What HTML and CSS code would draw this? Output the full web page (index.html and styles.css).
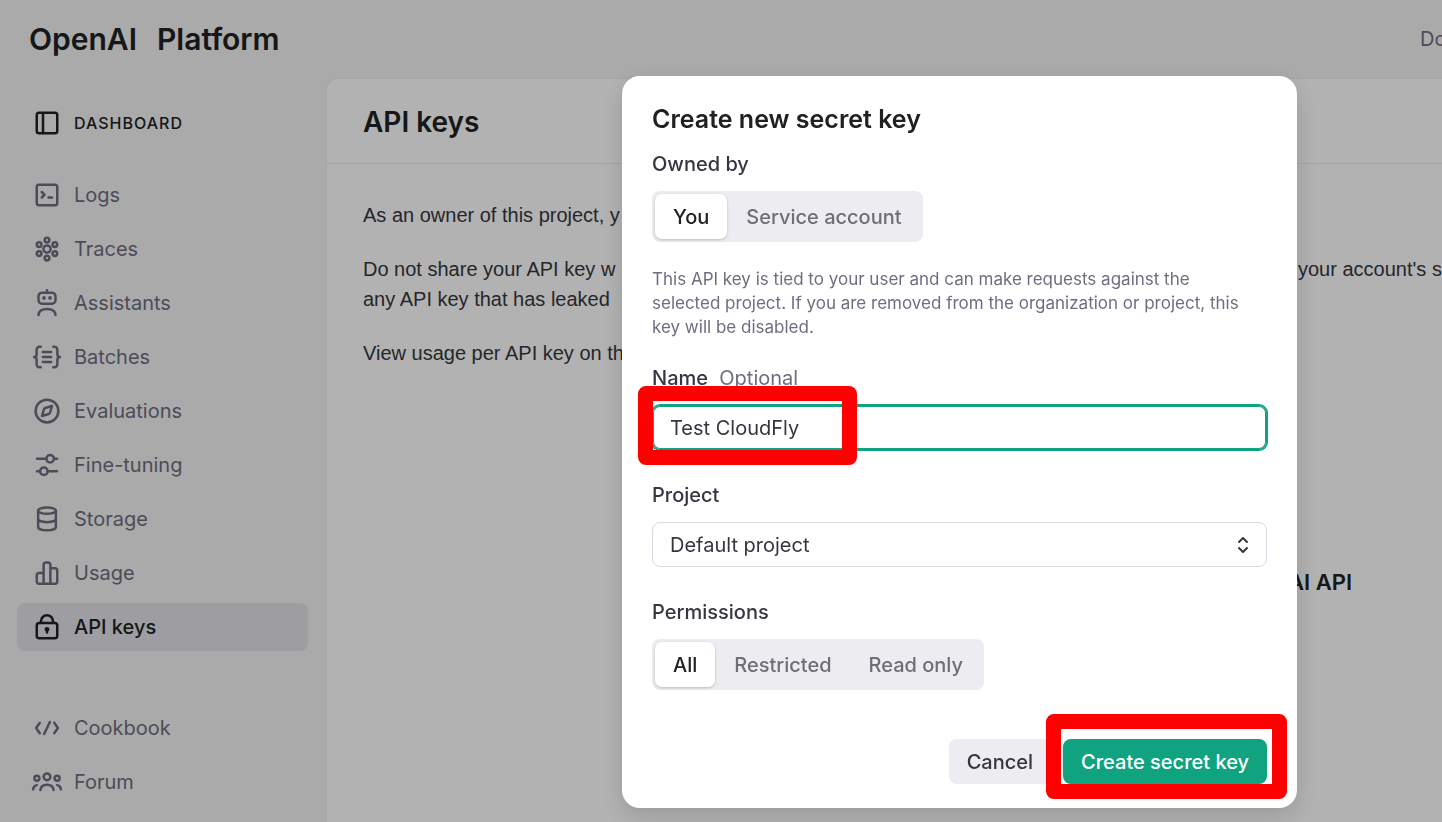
FILE: index.html
```
<!DOCTYPE html>
<html lang="en">
<head>
    <meta charset="UTF-8">
    <title>API keys - OpenAI Platform</title>
    <link rel="stylesheet" href="styles.css">
</head>
<body>
<div class="page">
    <header class="header">
        <a class="logo" href="#"><span>OpenAI</span><span>Platform</span></a>
        <nav class="top-nav"><a href="#">Docs</a></nav>
    </header>
    <div class="main">
        <nav class="sidebar">
            <a class="item title" href="#">
                <svg class="icon" viewBox="0 0 24 24"><rect x="3.800" y="3.800" width="16.400" height="16.400" rx="1.800"/><path d="M8.800 4v16"/></svg>
                DASHBOARD
            </a>
            <a class="item" href="#">
                <svg class="icon" viewBox="0 0 24 24"><rect x="3.800" y="3.800" width="16.400" height="16.400" rx="1.800"/><path d="M7.800 9.600 10 11.800l-2.200 2.200M13.200 14h2.800"/></svg>
                Logs
            </a>
            <a class="item" href="#">
                <svg class="icon" viewBox="0 0 24 24"><circle cx="12" cy="12" r="2.900"/><circle cx="12" cy="4.800" r="1.900"/><circle cx="12" cy="19.200" r="1.900"/><circle cx="5.700" cy="8.400" r="1.900"/><circle cx="18.300" cy="8.400" r="1.900"/><circle cx="5.700" cy="15.600" r="1.900"/><circle cx="18.300" cy="15.600" r="1.900"/></svg>
                Traces
            </a>
            <a class="item" href="#">
                <svg class="icon" viewBox="0 0 24 24"><path d="M12 1.800v2M5.200 21.500c0-2.800 2.800-4.800 6.800-4.800s6.800 2 6.800 4.800"/><rect x="5.200" y="3.700" width="13.600" height="8.800" rx="2.800"/><g class="fill"><circle cx="9.600" cy="7.900" r="1.500"/><circle cx="14.400" cy="7.900" r="1.500"/></g></svg>
                Assistants
            </a>
            <a class="item" href="#">
                <svg class="icon" viewBox="0 0 24 24"><path d="M7 3.800H6A2.300 2.300 0 0 0 3.700 6.100v3.400c0 1.500-.7 2.500-2 2.500 1.300 0 2 1 2 2.500v3.400A2.300 2.300 0 0 0 6 20.200h1M17 3.800h1a2.300 2.300 0 0 1 2.300 2.300v3.400c0 1.500.7 2.500 2 2.500-1.300 0-2 1-2 2.500v3.400a2.300 2.300 0 0 1-2.300 2.300h-1M8.700 8h6.600M8.700 12h6.600M8.700 16h6.600"/></svg>
                Batches
            </a>
            <a class="item" href="#">
                <svg class="icon" viewBox="0 0 24 24"><circle cx="12" cy="12" r="9.100"/><path d="M16 8l-1.600 5.400a1.500 1.500 0 0 1-1 1L8 16l1.600-5.400a1.500 1.500 0 0 1 1-1z"/></svg>
                Evaluations
            </a>
            <a class="item" href="#">
                <svg class="icon" viewBox="0 0 24 24"><path d="M4 7h7.500M17.500 7H20M4 17h2.500M12.500 17H20"/><circle cx="14.500" cy="7" r="3"/><circle cx="9.500" cy="17" r="3"/></svg>
                Fine-tuning
            </a>
            <a class="item" href="#">
                <svg class="icon" viewBox="0 0 24 24"><ellipse cx="12" cy="5.300" rx="7.100" ry="2.500"/><path d="M4.900 5.300v13.100c0 1.500 3.200 2.600 7.100 2.600s7.100-1.100 7.100-2.600V5.300M4.900 12c0 1.500 3.200 2.500 7.100 2.500s7.100-1 7.100-2.500"/></svg>
                Storage
            </a>
            <a class="item" href="#">
                <svg class="icon" viewBox="0 0 24 24"><path d="M9.300 20.500V5.300a1.800 1.800 0 0 1 1.800-1.800h1.800a1.800 1.800 0 0 1 1.800 1.800v15.200M9.300 12H5.600a1.800 1.800 0 0 0-1.800 1.800v5a1.700 1.700 0 0 0 1.700 1.700h13a1.700 1.700 0 0 0 1.700-1.700V10a1.800 1.800 0 0 0-1.800-1.800h-3.700"/></svg>
                Usage
            </a>
            <a class="item active" href="#">
                <svg class="icon" viewBox="0 0 24 24"><rect x="3.800" y="8.700" width="16.400" height="12.200" rx="2"/><path d="M7.200 8.500V7.400a4.800 4.800 0 0 1 9.600 0v1.100M12 14.500V16.400"/><circle class="fill" cx="12" cy="13.800" r="1.900"/></svg>
                API keys
            </a>
            <div class="links">
                <a class="item" href="#">
                    <svg class="icon" viewBox="0 0 24 24"><path d="M6.200 7.800 3.300 12l2.900 4.200M17.800 7.800l2.900 4.200-2.900 4.200M14.300 7.200l-4.600 9.600"/></svg>
                    Cookbook
                </a>
                <a class="item" href="#">
                    <svg class="icon" viewBox="0 0 24 24"><circle cx="12" cy="7.800" r="2.700"/><circle cx="3.900" cy="9" r="2"/><circle cx="20.100" cy="9" r="2"/><path d="M6.700 18.400c.4-2.700 2.500-4.100 5.300-4.100s4.900 1.400 5.300 4.100M.9 17.900c.2-1.900 1.200-3 2.900-3.400M23.100 17.900c-.2-1.900-1.200-3-2.900-3.400"/></svg>
                    Forum
                </a>
            </div>
        </nav>
        <main class="content">
            <h1>API keys</h1>
            <div class="text">
                <p>As an owner of this project, y</p>
                <p>
                    <span class="row"><span>Do not share your API key w</span><span>your account's s</span></span>
                    any API key that has leaked
                </p>
                <p>View usage per API key on th</p>
            </div>
            <h2>AI API</h2>
        </main>
    </div>
</div>
<div class="overlay">
    <form class="modal" role="dialog" aria-labelledby="modal-title">
        <h2 id="modal-title">Create new secret key</h2>
        <div class="label">Owned by</div>
        <div class="tabs">
            <button type="button" class="on">You</button>
            <button type="button">Service account</button>
        </div>
        <p class="desc">This API key is tied to your user and can make requests against the selected project. If you are removed from the organization or project, this key will be disabled.</p>
        <label class="label" for="name">Name <span>Optional</span></label>
        <div class="field">
            <input id="name" type="text" value="Test CloudFly">
            <div class="mark mark-name"></div>
        </div>
        <label class="label" for="project">Project</label>
        <div class="field">
            <select id="project">
                <option>Default project</option>
            </select>
            <svg class="arrows" viewBox="0 0 12 18"><path d="M2 6l4-4 4 4M2 12l4 4 4-4"/></svg>
        </div>
        <div class="label">Permissions</div>
        <div class="tabs">
            <button type="button" class="on">All</button>
            <button type="button">Restricted</button>
            <button type="button">Read only</button>
        </div>
        <div class="actions">
            <button type="button" class="btn">Cancel</button>
            <div class="submit">
                <button type="submit" class="btn primary">Create secret key</button>
                <div class="mark mark-submit"></div>
            </div>
        </div>
    </form>
</div>
</body>
</html>
```
FILE: styles.css
```
*{
    margin: 0;
    padding: 0;
    box-sizing: border-box;
}
body{
    font: 20px/30px Inter, "Liberation Sans", sans-serif;
    color: #353740;
    background: #f4f4f4;
    overflow: hidden;
}
a{
    color: inherit;
    text-decoration: none;
}
button,input,select{
    font: inherit;
    color: inherit;
    border: 0;
}
.page{
    display: flex;
    flex-direction: column;
    min-height: 100vh;
    overflow: hidden;
}
.header{
    height: 78px;
    padding: 0 0 1px 29px;
    display: flex;
    align-items: center;
    justify-content: space-between;
}
.logo{
    display: flex;
    gap: 20px;
    font-size: 30px;
    font-weight: 600;
    color: #202123;
}
.top-nav{
    width: 22px;
    color: #6e6e80;
    white-space: nowrap;
}
.main{
    flex: 1;
    display: flex;
}
/*sidebar*/
.sidebar{
    width: 326px;
    padding: 21px 18px 16px 17px;
    display: flex;
    flex-direction: column;
    gap: 6px;
    flex-shrink: 0;
}
.item{
    height: 48px;
    padding-left: 15px;
    display: flex;
    align-items: center;
    gap: 12px;
    border-radius: 8px;
    color: #6e6e80;
}
.item.title{
    margin-bottom: 18px;
    font-size: 16px;
    font-weight: 500;
    letter-spacing: 1px;
    color: #202123;
}
.item.active{
    background: #e3e1e9;
    color: #202123;
    font-weight: 500;
}
.links{
    margin-top: 47px;
    display: flex;
    flex-direction: column;
    gap: 6px;
}
.icon{
    width: 30px;
    height: 30px;
    flex-shrink: 0;
    overflow: visible;
    fill: none;
    stroke: currentColor;
    stroke-width: 2;
    stroke-linecap: round;
    stroke-linejoin: round;
}
.icon .fill{
    fill: currentColor;
    stroke: none;
}
/*content*/
.content{
    flex: 1;
    min-width: 0;
    background: #fff;
    border: 1px solid #ececf1;
    border-width: 1px 0 0 1px;
    border-radius: 12px 0 0 0;
}
.content h1{
    padding: 25px 36px 23px;
    font-size: 28px;
    line-height: 36px;
    font-weight: 600;
    color: #202123;
    border-bottom: 1px solid #ececf1;
}
.text{
    padding: 36px 0 0 36px;
    display: flex;
    flex-direction: column;
    gap: 24px;
    font-family: "Liberation Sans", sans-serif;
    white-space: nowrap;
}
.row{
    display: grid;
    grid-template-columns: 935px 1fr;
}
.content h2{
    margin-top: 199px;
    padding-right: 90px;
    text-align: right;
    font-size: 22px;
    font-weight: 600;
    color: #202123;
}
/*modal*/
.overlay{
    position: fixed;
    top: 0;
    left: 0;
    width: 100%;
    height: 100%;
    padding: 76px 145px 0 0;
    display: flex;
    align-items: flex-start;
    justify-content: flex-end;
    background: rgba(0,0,0,.3);
}
.modal{
    width: 675px;
    padding: 28px 30px 24px;
    background: #fff;
    border-radius: 18px;
    box-shadow: 0 8px 24px rgba(0,0,0,.15);
}
.modal h2{
    margin-bottom: 15px;
    font-size: 25px;
    line-height: 30px;
    font-weight: 600;
    color: #202123;
}
.label{
    display: block;
    margin-bottom: 12px;
    font-weight: 500;
}
.label span{
    margin-left: 6px;
    color: #6e6e80;
    font-weight: 400;
}
.tabs{
    width: fit-content;
    padding: 3px;
    display: flex;
    gap: 1px;
    background: #ececf1;
    border-radius: 8px;
}
.tabs button{
    height: 45px;
    padding: 0 18px;
    border-radius: 7px;
    background: none;
    color: #6e6e78;
    font-weight: 500;
}
.tabs .on{
    background: #fff;
    color: #202123;
    box-shadow: 0 1px 3px rgba(0,0,0,.2);
}
.desc{
    max-width: 600px;
    margin: 25px 0 24px;
    font-size: 17px;
    line-height: 24px;
    color: #6e6e80;
}
.field{
    position: relative;
    margin-bottom: 30px;
}
.field input,.field select{
    display: block;
    width: 100%;
    height: 45px;
    padding: 0 17px;
    border: 1px solid #d9d9e3;
    border-radius: 8px;
    background: #fff;
    outline: none;
    appearance: none;
}
.field input{
    border-color: #10a37f;
    box-shadow: 0 0 0 1px #10a37f, inset 0 0 0 1px #10a37f;
}
.arrows{
    position: absolute;
    top: 14px;
    right: 18px;
    width: 12px;
    height: 18px;
    fill: none;
    stroke: #353740;
    stroke-width: 2;
    stroke-linecap: round;
    stroke-linejoin: round;
}
.actions{
    margin-top: 49px;
    display: flex;
    justify-content: flex-end;
    gap: 12px;
}
.btn{
    height: 45px;
    padding: 0 18px;
    border-radius: 8px;
    background: #ececf1;
    font-weight: 500;
}
.btn.primary{
    background: #10a37f;
    color: #fff;
}
.submit{
    position: relative;
}
/*red frames*/
.mark{
    position: absolute;
    border: 15px solid #f00;
    border-radius: 8px;
    pointer-events: none;
}
.mark-name{
    left: -14px;
    top: -19px;
    width: 219px;
    height: 79px;
}
.mark-submit{
    left: -17px;
    right: -20px;
    top: -25px;
    height: 85px;
}
```
